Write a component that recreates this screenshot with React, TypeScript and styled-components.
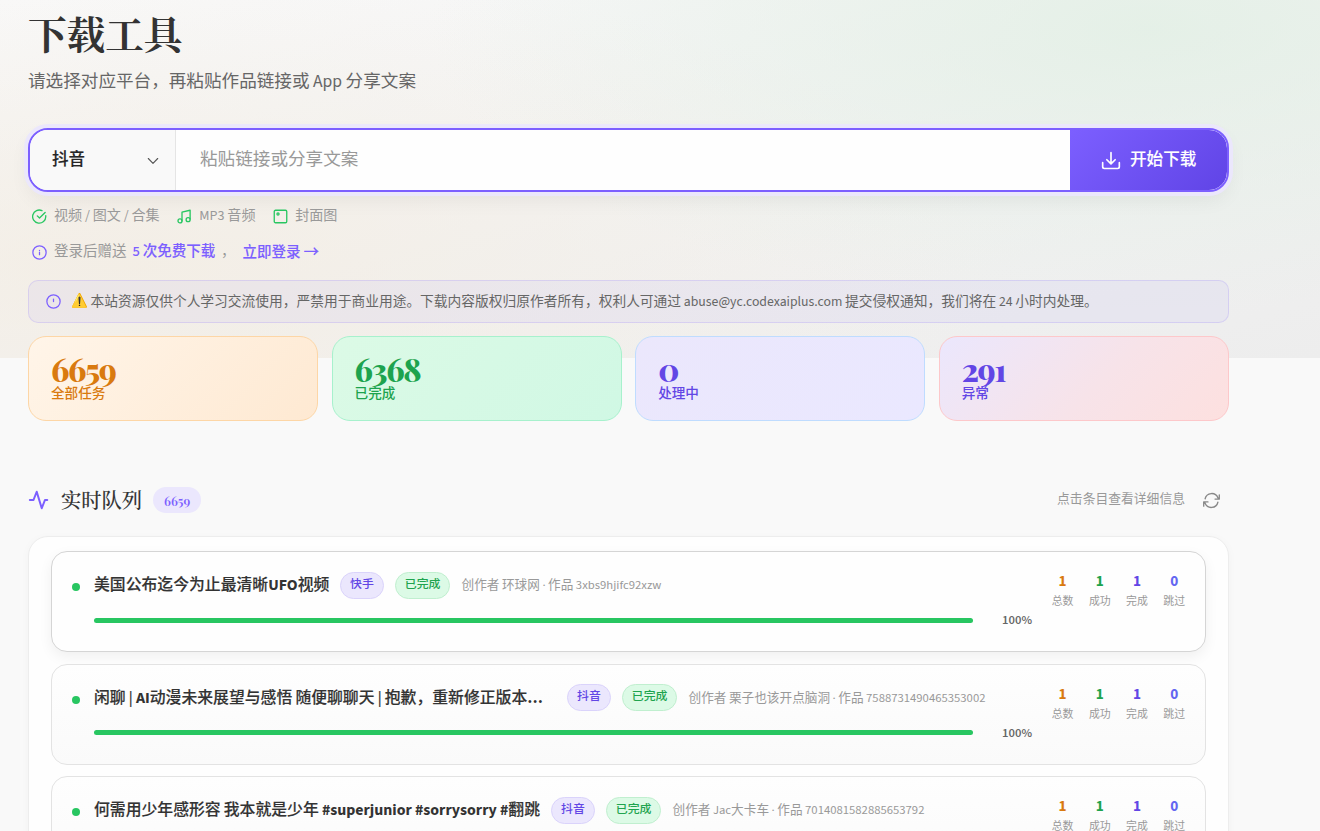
import React from "react";
import styled, { createGlobalStyle } from "styled-components";

const sans = `"Source Sans 3", "Source Sans Pro", "Noto Sans CJK SC", "Noto Sans", sans-serif`;
const serif = `"Playfair Display", "Noto Serif CJK SC", "Noto Serif SC", "Liberation Serif", "Noto Sans CJK SC", serif`;

const Global = createGlobalStyle`
  * { box-sizing: border-box; }
  html, body { margin: 0; background: #f9f9f9; }
  body { font-family: ${sans}; color: #333; height: 831px; overflow: hidden; }
  button, input { font-family: inherit; }
`;

const Page = styled.div`
  height: 831px;
  overflow: hidden;
  padding: 6px 91px 0 28px;
  background:
    radial-gradient(ellipse 720px 280px at 1150px 30px, rgba(225, 239, 228, 0.8), rgba(225, 239, 228, 0)) 0 0 / 1320px 358px no-repeat,
    radial-gradient(ellipse 900px 300px at 130px 265px, rgba(243, 236, 225, 0.75), rgba(243, 236, 225, 0)) 0 0 / 1320px 358px no-repeat,
    linear-gradient(165deg, #f9f9f9, #ededed) 0 0 / 1320px 358px no-repeat,
    #f9f9f9;
`;

const Title = styled.h1`
  margin: 0;
  font: 700 38.6px/54px ${serif};
  color: #333;
`;

const Subtitle = styled.p`
  margin: 7px 0 0;
  font-size: 17.6px;
  line-height: 30px;
  color: #666;
`;

const SearchBar = styled.div`
  display: flex;
  height: 64px;
  margin-top: 31px;
  border: 2px solid #7c5fff;
  border-radius: 20px;
  overflow: hidden;
  background: #fefefe;
  box-shadow: 0 0 0 4px #ebe7fc, 0 8px 20px rgba(0, 0, 0, 0.06);
`;

const Platform = styled.div`
  display: flex;
  align-items: center;
  justify-content: space-between;
  width: 146px;
  padding: 0 16px 0 22px;
  border-right: 1px solid #e5e5e5;
  background: #f9f9f9;
  color: #262626;
  font-size: 16.5px;
  font-weight: 500;
  -webkit-text-stroke: 0.15px currentColor;
  line-height: 24px;
  svg { margin-top: 2px; }
`;

const LinkInput = styled.input`
  flex: 1;
  min-width: 0;
  border: 0;
  outline: 0;
  padding: 0 24px 1px;
  background: transparent;
  font-family: ${sans};
  font-size: 17.6px;
  color: #333;
  &::placeholder { color: #999; opacity: 1; }
`;

const Submit = styled.button`
  display: flex;
  align-items: center;
  gap: 9px;
  width: 157px;
  padding: 0 0 3px 31px;
  border: 0;
  border-radius: 0 18px 18px 0;
  background: linear-gradient(135deg, #7c5fff, #6044e6);
  color: #fff;
  font-size: 16.6px;
  font-weight: 500;
  -webkit-text-stroke: 0.1px currentColor;
  white-space: nowrap;
  svg { margin-top: 4px; }
`;

const MetaRow = styled.div`
  display: flex;
  align-items: center;
  height: 24px;
  margin-top: 12px;
  padding-left: 4px;
  color: #999;
  font-size: 14.4px;
  line-height: 24px;
  white-space: nowrap;
`;

const MetaItem = styled.span<{ $size?: number }>`
  display: flex;
  align-items: center;
  gap: 7px;
  margin-right: 17.6px;
  font-size: ${(p) => p.$size ?? 14.1}px;
  svg { margin-top: 1px; }
`;

const Strong = styled.span<{ $left: number }>`
  margin-left: ${(p) => p.$left}px;
  color: #7c5fff;
  font-size: 14.5px;
  font-weight: 500;
  -webkit-text-stroke: 0.08px currentColor;
`;

const Arrow = styled.span`
  margin-left: 3px;
  font-family: "Noto Sans CJK SC", sans-serif;
  font-weight: 500;
  font-size: 15.5px;
  line-height: 20px;
`;

const Notice = styled.div`
  display: flex;
  align-items: center;
  height: 43px;
  margin-top: 16px;
  padding: 0 0 2px 17px;
  border: 1px solid rgba(124, 95, 255, 0.17);
  border-radius: 10px;
  background: rgba(124, 95, 255, 0.06);
  color: #666;
  font-size: 13.74px;
  white-space: nowrap;
  svg { margin: 2px 10px 0 0; }
`;

const Warn = styled.span`
  width: 19.5px;
  font-size: 13.6px;
`;

const Cards = styled.div`
  display: grid;
  grid-template-columns: repeat(4, 1fr);
  gap: 13.4px;
  margin-top: 13px;
`;

const Card = styled.div<{ $bg: string; $border: string; $color: string }>`
  height: 85px;
  padding: 16px 22px;
  border: 1px solid ${(p) => p.$border};
  border-radius: 18px;
  background: ${(p) => p.$bg};
  color: ${(p) => p.$color};
`;

const CardLabel = styled.div`
  margin-top: -1px;
  font-size: 13.6px;
  font-weight: 500;
  line-height: 20px;
`;

const Figure = styled.div`
  font: 800 32px/32px ${serif};
  letter-spacing: -0.045em;
`;

const QueueHead = styled.div`
  display: flex;
  align-items: center;
  height: 30px;
  margin-top: 64px;
`;

const QueueTitle = styled.h2`
  margin: 0 11px 0 11px;
  font: 500 20.3px/30px ${serif};
  -webkit-text-stroke: 0.1px currentColor;
  color: #333;
`;

const Count = styled.span`
  width: 48px;
  height: 26px;
  border-radius: 13px;
  background: #ebe7fd;
  color: #7c5fff;
  font: 600 12.6px/28px ${serif};
  text-align: center;
`;

const Hint = styled.span`
  margin-left: auto;
  margin-right: 18px;
  padding-bottom: 2px;
  color: #999;
  font-size: 12.8px;
  line-height: 20px;
`;

const RefreshSlot = styled.span`
  display: flex;
  margin-right: 9px;
`;

const Panel = styled.div`
  display: flex;
  flex-direction: column;
  gap: 11.5px;
  height: 420px;
  margin-top: 21px;
  padding: 14px 22px;
  border: 1px solid #ededed;
  border-radius: 20px;
  background: #fefefe;
  box-shadow: 0 2px 10px rgba(0, 0, 0, 0.03);
`;

const Row = styled.div<{ $active?: boolean }>`
  display: flex;
  flex: none;
  height: 101px;
  padding: 18px 16px 0 20px;
  border: 1px solid ${(p) => (p.$active ? "#d5d5d5" : "#e3e3e3")};
  border-radius: 16px;
  background: ${(p) => (p.$active ? "#fefefe" : "linear-gradient(#fefefe, #fafafa)")};
  box-shadow: ${(p) => (p.$active ? "0 5px 14px rgba(0, 0, 0, 0.06)" : "none")};
`;

const Dot = styled.i`
  flex: none;
  width: 8px;
  height: 8px;
  margin: 13px 14px 0 0;
  border-radius: 50%;
  background: #28c661;
`;

const Main = styled.div`
  flex: none;
  width: 938px;
`;

const Line = styled.div`
  display: flex;
  align-items: center;
  height: 30px;
  white-space: nowrap;
`;

const RowTitle = styled.span<{ $w: number }>`
  width: ${(p) => p.$w}px;
  font-size: 15.84px;
  font-weight: 500;
  -webkit-text-stroke: 0.15px currentColor;
  line-height: 26px;
  color: #333;
  b {
    font-weight: 700;
    -webkit-text-stroke: 0;
  }
`;

const Tag = styled.span<{ $green?: boolean }>`
  height: 27px;
  margin-right: 11px;
  padding: 0 9px;
  border: 1px solid ${(p) => (p.$green ? "#c0efcf" : "#dad3fb")};
  border-radius: 14px;
  background: ${(p) => (p.$green ? "#dcfae6" : "#ebe7fd")};
  color: ${(p) => (p.$green ? "#1fa44f" : "#6246e5")};
  font-size: 11.9px;
  font-weight: 500;
  line-height: 24px;
`;

const Creator = styled.span`
  padding-bottom: 2px;
  color: #999;
  font-size: 12.65px;
`;

const ProgressLine = styled.div`
  display: flex;
  align-items: center;
  justify-content: space-between;
  height: 18px;
  margin-top: 11px;
  color: #666;
  font-size: 12.6px;
  font-weight: 600;
`;

const Bar = styled.div`
  width: 879px;
  height: 5px;
  border-radius: 3px;
  background: #28c661;
`;

const Counters = styled.div`
  display: grid;
  grid-template-columns: repeat(4, 37.2px);
  align-content: start;
  margin-left: 12px;
  padding-top: 1px;
  text-align: center;
`;

const Counter = styled.div<{ $c: string }>`
  color: #999;
  font-size: 10.9px;
  line-height: 20px;
  b {
    display: block;
    color: ${(p) => p.$c};
    font-size: 15.2px;
    font-weight: 700;
    line-height: 21px;
  }
`;

const Icon = ({ size, color, width = 1.8, box = 24, children }: {
  size: number; color: string; width?: number; box?: number; children: React.ReactNode;
}) => (
  <svg width={size} height={size} viewBox={`0 0 ${box} ${box}`} fill="none" stroke={color}
    strokeWidth={width} strokeLinecap="round" strokeLinejoin="round">
    {children}
  </svg>
);

const cards = [
  { n: "6659", label: "全部任务", bg: "linear-gradient(135deg, #fff5e9, #fee9d2)", border: "#fdd6a6", color: "#d97a0f" },
  { n: "6368", label: "已完成", bg: "linear-gradient(135deg, #dcfae6, #d0f8e4)", border: "#a7f1cd", color: "#1da34e" },
  { n: "0", label: "处理中", bg: "linear-gradient(135deg, #ebe7fc, #eae8ff)", border: "#bfdcff", color: "#6246e5" },
  { n: "291", label: "异常", bg: "linear-gradient(135deg, #ebe7fd, #f7e3e9 55%, #fde0df)", border: "#fdc8ca", color: "#6246e5" },
];

const rows = [
  { title: "美国公布迄今为止最清晰UFO视频", w: 246, tag: "快手", meta: "创作者 环球网 · 作品 3xbs9hjifc92xzw", active: true },
  { title: "闲聊 | AI动漫未来展望与感悟 随便聊聊天 | 抱歉，重新修正版本…", w: 473, tag: "抖音", meta: "创作者 栗子也该开点脑洞 · 作品 7588731490465353002" },
  { title: "何需用少年感形容 我本就是少年 #superjunior #sorrysorry #翻跳", w: 457, tag: "抖音", meta: "创作者 Jac大卡车 · 作品 7014081582885653792" },
];

const counters = [
  ["1", "总数", "#d97a0f"],
  ["1", "成功", "#1da34e"],
  ["1", "完成", "#6246e5"],
  ["0", "跳过", "#6366f1"],
];

// Latin words are set heavier than the Chinese text around them.
const emphasizeLatin = (text: string) =>
  text.split(/([#\w]+|…)/).map((part, i) => (i % 2 ? <b key={i}>{part}</b> : part));

export default function App() {
  return (
    <>
      <Global />
      <Page>
        <Title>下载工具</Title>
        <Subtitle>请选择对应平台，再粘贴作品链接或 App 分享文案</Subtitle>

        <SearchBar>
          <Platform>
            抖音
            <Icon size={12} box={12} color="#555" width={1.1}><path d="M1.3 3.5 6 8.4l4.7-4.9" /></Icon>
          </Platform>
          <LinkInput placeholder="粘贴链接或分享文案" />
          <Submit>
            <Icon size={20} color="#fff" width={2}>
              <path d="M12 2v13M7 10.5l5 5 5-5M2 14v5a2 2 0 0 0 2 2h16a2 2 0 0 0 2-2v-5" />
            </Icon>
            开始下载
          </Submit>
        </SearchBar>

        <MetaRow>
          <MetaItem>
            <Icon size={15} color="#28c661" width={2.1}>
              <path d="M22 10.5V12a10.5 10.5 0 1 1-6-9.3M21 5.5 12 14.5l-3.5-3.5" />
            </Icon>
            视频 / 图文 / 合集
          </MetaItem>
          <MetaItem>
            <Icon size={15} color="#28c661" width={2.1}>
              <path d="M8 19V5l13-3v14" /><circle cx="4.8" cy="19" r="3.2" /><circle cx="17.8" cy="17" r="3.2" />
            </Icon>
            MP3 音频
          </MetaItem>
          <MetaItem>
            <Icon size={15} color="#28c661" width={2.1}>
              <rect x="2" y="2" width="20" height="20" rx="2" /><circle cx="8" cy="8" r="1.7" />
            </Icon>
            封面图
          </MetaItem>
        </MetaRow>

        <MetaRow>
          <MetaItem $size={14.5}>
            <Icon size={15} color="#7c5fff" width={2}>
              <circle cx="12" cy="12" r="10.6" /><path d="M12 11.5v4M12 8.5v.1" />
            </Icon>
            登录后赠送
          </MetaItem>
          <Strong $left={-11.5}>5 次免费下载</Strong>
          <span>&nbsp;&nbsp;，</span>
          <Strong $left={7}>立即登录<Arrow>→</Arrow></Strong>
        </MetaRow>

        <Notice>
          <Icon size={15} color="#7c5fff" width={2}>
            <circle cx="12" cy="12" r="10.6" /><path d="M12 8v4" />
          </Icon>
          <Warn>⚠️</Warn>
          本站资源仅供个人学习交流使用，严禁用于商业用途。下载内容版权归原作者所有，权利人可通过 abuse@yc.codexaiplus.com 提交侵权通知，我们将在 24 小时内处理。
        </Notice>

        <Cards>
          {cards.map((c) => (
            <Card key={c.label} $bg={c.bg} $border={c.border} $color={c.color}>
              <Figure>{c.n}</Figure>
              <CardLabel>{c.label}</CardLabel>
            </Card>
          ))}
        </Cards>

        <QueueHead>
          <Icon size={22} color="#7c5fff" width={2.2}>
            <path d="M2 12h4l3.5-9 5.5 18 3.5-9H21" />
          </Icon>
          <QueueTitle>实时队列</QueueTitle>
          <Count>6659</Count>
          <Hint>点击条目查看详细信息</Hint>
          <RefreshSlot>
            <Icon size={17} color="#888" width={1.9}>
              <path d="M3 9.5A9.5 9.5 0 0 1 21 8l2 2M23 4v6h-6M21 14.5A9.5 9.5 0 0 1 3 16l-2-2M1 20v-6h6" />
            </Icon>
          </RefreshSlot>
        </QueueHead>

        <Panel>
          {rows.map((r) => (
            <Row key={r.title} $active={r.active}>
              <Dot />
              <Main>
                <Line>
                  <RowTitle $w={r.w}>{emphasizeLatin(r.title)}</RowTitle>
                  <Tag>{r.tag}</Tag>
                  <Tag $green>已完成</Tag>
                  <Creator>{r.meta}</Creator>
                </Line>
                <ProgressLine><Bar />100%</ProgressLine>
              </Main>
              <Counters>
                {counters.map(([n, label, c]) => (
                  <Counter key={label} $c={c}><b>{n}</b>{label}</Counter>
                ))}
              </Counters>
            </Row>
          ))}
        </Panel>
      </Page>
    </>
  );
}
